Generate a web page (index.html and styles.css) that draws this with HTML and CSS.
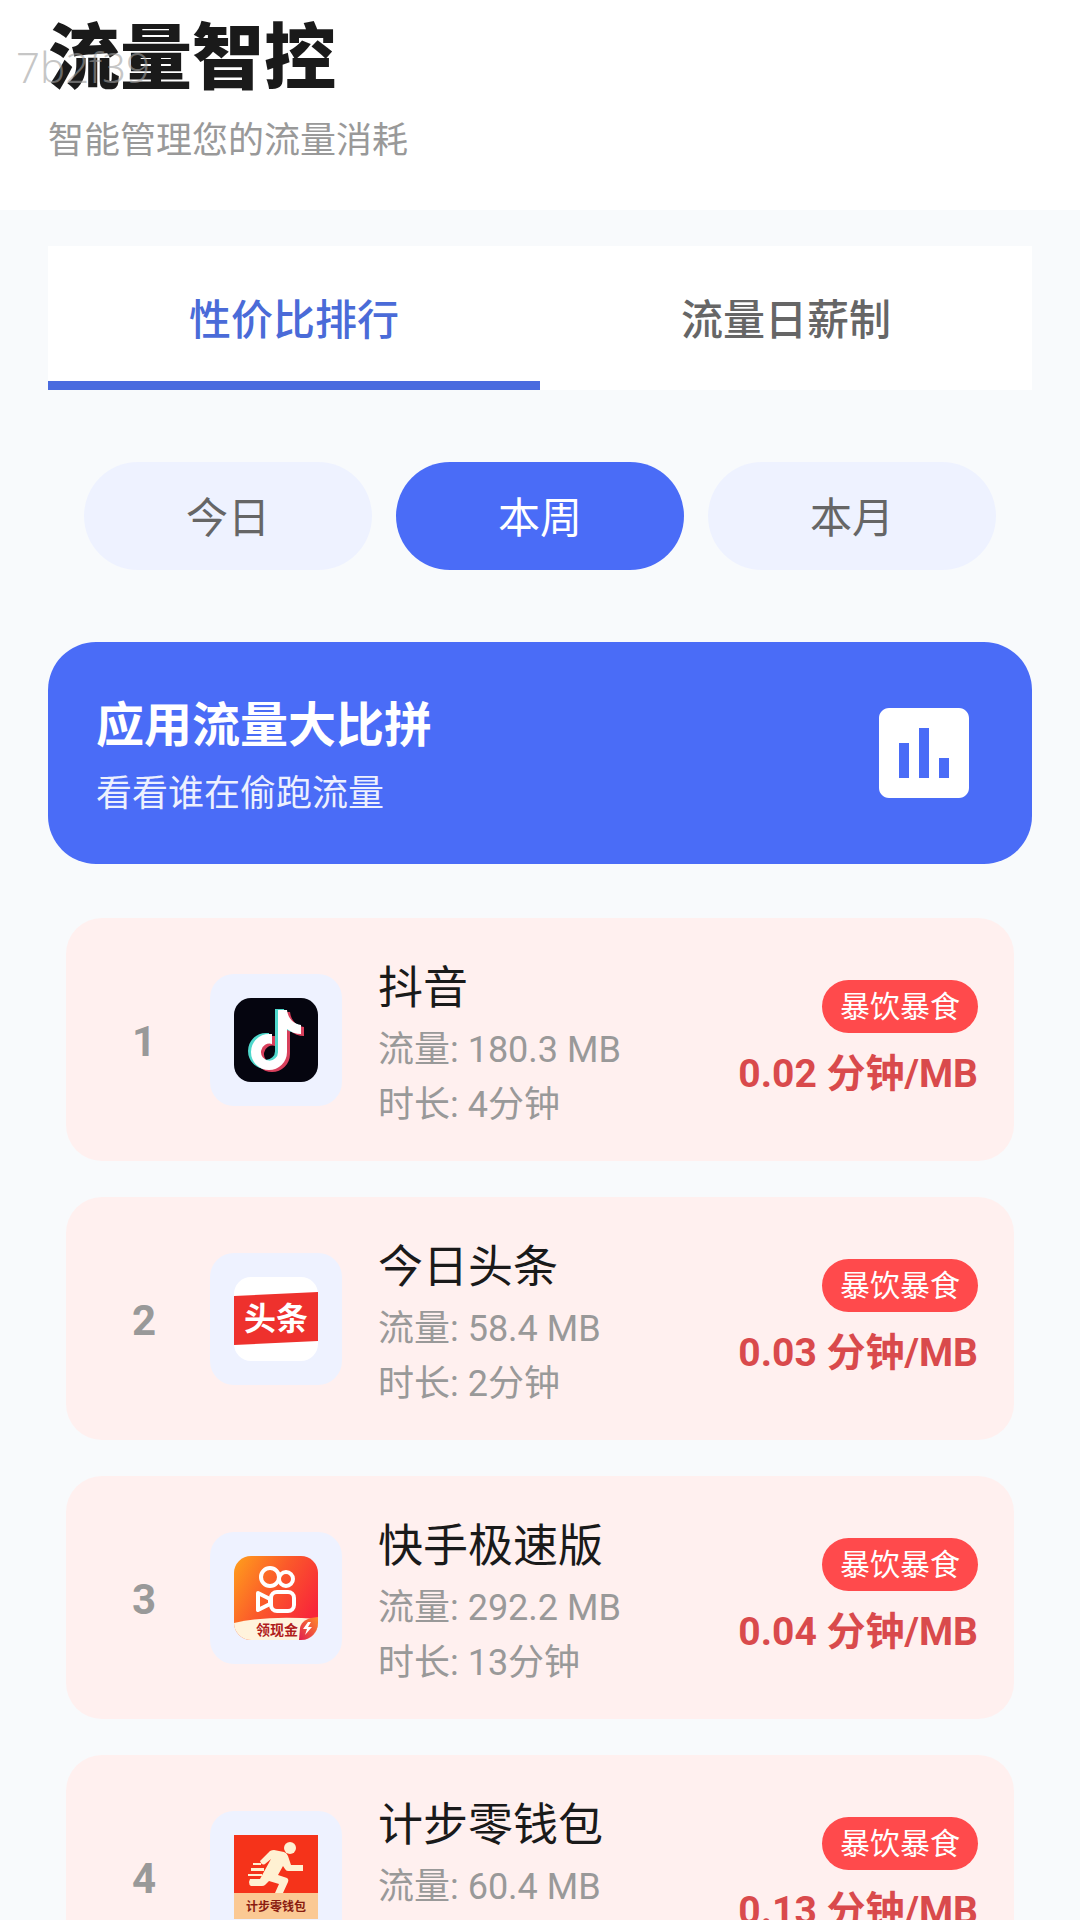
FILE: index.html
```html
<!DOCTYPE html>
<html lang="zh-CN">
<head>
  <meta charset="UTF-8">
  <meta name="viewport" content="width=device-width, initial-scale=1.0">
  <title>流量智控</title>
  <link rel="stylesheet" href="styles.css">
</head>
<body>
<header class="header">
  <h1>流量智控</h1>
  <p class="subtitle">智能管理您的流量消耗</p>
  <span class="watermark">7b2f39</span>
</header>

<main class="main-content">
  <div class="tabs">
    <button class="tab active" type="button">性价比排行</button>
    <button class="tab" type="button">流量日薪制</button>
  </div>

  <div class="periods">
    <button class="period" type="button">今日</button>
    <button class="period active" type="button">本周</button>
    <button class="period" type="button">本月</button>
  </div>

  <section class="banner">
    <div>
      <h2>应用流量大比拼</h2>
      <p>看看谁在偷跑流量</p>
    </div>
    <svg class="banner-icon" viewBox="0 0 24 24" fill="#fff">
      <path d="M19 3H5c-1.1 0-2 .9-2 2v14c0 1.1.9 2 2 2h14c1.1 0 2-.9 2-2V5c0-1.1-.9-2-2-2zM9 17H7v-7h2v7zm4 0h-2V7h2v10zm4 0h-2v-4h2v4z"/>
    </svg>
  </section>

  <ol class="app-list">
    <li class="app-item">
      <span class="rank">1</span>
      <div class="app-icon">
        <svg viewBox="0 0 84 84">
          <defs>
            <path id="note" d="M43 12h9c1 8 6 14 14 15v9c-5 0-10-2-14-5v23a18 18 0 1 1-18-18h3v10a8.500 8.500 0 1 0 6 8z"/>
          </defs>
          <rect width="84" height="84" rx="17" fill="#05050f"/>
          <use href="#note" x="4" y="2" fill="#d8405c"/>
          <use href="#note" x="-2" y="-1" fill="#4fd8cc"/>
          <use href="#note" x="1" fill="#fff"/>
        </svg>
      </div>
      <div class="app-info">
        <h3>抖音</h3>
        <p>流量: 180.3 MB</p>
        <p>时长: 4分钟</p>
      </div>
      <div class="app-score">
        <span class="badge">暴饮暴食</span>
        <span class="ratio">0.02 分钟/MB</span>
      </div>
    </li>

    <li class="app-item">
      <span class="rank">2</span>
      <div class="app-icon">
        <svg viewBox="0 0 84 84">
          <rect width="84" height="84" rx="17" fill="#fff"/>
          <path d="M0 19L84 15V64L0 68z" fill="#ee312d"/>
          <text class="toutiao-text" x="42" y="53">头条</text>
        </svg>
      </div>
      <div class="app-info">
        <h3>今日头条</h3>
        <p>流量: 58.4 MB</p>
        <p>时长: 2分钟</p>
      </div>
      <div class="app-score">
        <span class="badge">暴饮暴食</span>
        <span class="ratio">0.03 分钟/MB</span>
      </div>
    </li>

    <li class="app-item">
      <span class="rank">3</span>
      <div class="app-icon">
        <svg viewBox="0 0 84 84">
          <defs>
            <linearGradient id="ksBg" x1="0" y1="0" x2="1" y2="0.6">
              <stop offset="0" stop-color="#ffa01c"/>
              <stop offset="0.5" stop-color="#fb5a2a"/>
              <stop offset="1" stop-color="#f8253a"/>
            </linearGradient>
            <linearGradient id="ksCorner" x1="1" y1="0" x2="0" y2="1">
              <stop offset="0" stop-color="#ff8a2a"/>
              <stop offset="1" stop-color="#e01c50"/>
            </linearGradient>
            <clipPath id="ksClip"><rect width="84" height="84" rx="17"/></clipPath>
          </defs>
          <g clip-path="url(#ksClip)">
            <rect width="84" height="84" fill="url(#ksBg)"/>
            <path d="M0 67Q34 59 84 63V84H0z" fill="#fff3dc"/>
            <path d="M84 61Q68 62 66 72L65 84H84z" fill="url(#ksCorner)"/>
            <path d="M74 66l-5 7h4l-2 6 7-8h-4l3-5z" fill="#fff"/>
          </g>
          <g fill="none" stroke="#fff" stroke-width="4" stroke-linejoin="round">
            <circle cx="36" cy="21" r="9"/>
            <circle cx="52" cy="23" r="7"/>
            <rect x="37" y="36" width="23" height="19" rx="6"/>
            <path d="M24 37L36 43V48L24 54z"/>
          </g>
          <text class="ks-text" x="43" y="79">领现金</text>
        </svg>
      </div>
      <div class="app-info">
        <h3>快手极速版</h3>
        <p>流量: 292.2 MB</p>
        <p>时长: 13分钟</p>
      </div>
      <div class="app-score">
        <span class="badge">暴饮暴食</span>
        <span class="ratio">0.04 分钟/MB</span>
      </div>
    </li>

    <li class="app-item">
      <span class="rank">4</span>
      <div class="app-icon">
        <svg viewBox="0 0 84 84">
          <rect width="84" height="59" fill="#f5331a"/>
          <rect y="58" width="84" height="26" fill="#fbc994"/>
          <g fill="#fff1d2">
            <circle cx="56" cy="13" r="6"/>
            <path d="M26 26L36 16Q38 15 40 15L50 17Q53 18 54 21L57 30H69V36H54Q52 36 51 34L49 31L44 40L53 43Q55 44 54 47L49 58H41L45 49L35 46L31 50Q30 51 28 51H17Q15 50 15 47L16 44H26L37 24L31 29Q28 31 26 26z"/>
            <path d="M19 28h8v2h-8zM17 33h13v3h-13zM14 39h14v2h-14z"/>
          </g>
          <text class="step-text" x="42" y="76">计步零钱包</text>
        </svg>
      </div>
      <div class="app-info">
        <h3>计步零钱包</h3>
        <p>流量: 60.4 MB</p>
        <p>时长: 8分钟</p>
      </div>
      <div class="app-score">
        <span class="badge">暴饮暴食</span>
        <span class="ratio">0.13 分钟/MB</span>
      </div>
    </li>
  </ol>
</main>
</body>
</html>
```

FILE: styles.css
```css
* {
  box-sizing: border-box;
}

body {
  display: flex;
  flex-direction: column;
  height: 100vh;
  margin: 0;
  overflow: hidden;
  font-family: Roboto, "Noto Sans CJK SC", sans-serif;
  background-color: #f8fafc;
  color: #1a1a1a;
}

h1, h2, h3, p {
  margin: 0;
}

button {
  border: none;
  padding: 0;
  font-family: inherit;
  font-size: 42px;
  color: #666;
  cursor: pointer;
}

.header {
  position: relative;
  flex-shrink: 0;
  padding: 11px 48px 45px;
  background-color: #fff;
}

.header h1 {
  font-size: 72px;
  line-height: 96px;
  font-weight: 900;
}

.subtitle {
  margin-top: 10px;
  font-size: 36px;
  line-height: 48px;
  color: #999;
}

.watermark {
  position: absolute;
  left: 16px;
  top: 40px;
  font-family: "Noto Sans", sans-serif;
  font-size: 42px;
  line-height: 54px;
  font-weight: 300;
  color: rgba(160, 160, 160, 0.6);
}

.main-content {
  flex: 1;
  min-height: 0;
  padding: 36px 48px;
}

.tabs {
  display: flex;
  background-color: #fff;
}

.tab {
  flex: 1;
  height: 144px;
  border-top: 5px solid transparent;
  border-bottom: 9px solid transparent;
  background: none;
  font-weight: 500;
}

.tab.active {
  color: #4a6bd8;
  border-bottom-color: #4a6bdf;
}

.periods {
  display: flex;
  gap: 24px;
  padding: 72px 36px;
}

.period {
  flex: 1;
  height: 108px;
  padding-bottom: 4px;
  border-radius: 54px;
  background-color: #eef2ff;
}

.period.active {
  background-color: #4a6cf7;
  color: #fff;
}

.banner {
  display: flex;
  align-items: center;
  justify-content: space-between;
  padding: 48px;
  border-radius: 48px;
  background-color: #4a6cf7;
  color: #fff;
}

.banner h2 {
  font-size: 48px;
  line-height: 72px;
  font-weight: 700;
}

.banner p {
  margin-top: 8px;
  font-size: 36px;
  line-height: 48px;
  opacity: 0.9;
}

.banner-icon {
  width: 120px;
  height: 120px;
}

.banner > div {
  height: 126px;
}

.app-list {
  display: flex;
  flex-direction: column;
  gap: 36px;
  margin: 54px 0 0;
  padding: 0 18px;
  list-style: none;
}

.app-item {
  display: flex;
  align-items: center;
  padding: 31px 36px;
  border-radius: 36px;
  background-color: #fff0ef;
}

.rank {
  width: 84px;
  margin-right: 24px;
  padding-top: 4px;
  text-align: center;
  font-size: 42px;
  font-weight: 700;
  color: #999;
}

.app-icon {
  display: flex;
  align-items: center;
  justify-content: center;
  width: 132px;
  height: 132px;
  margin-right: 36px;
  border-radius: 24px;
  background-color: #eef2ff;
}

.app-icon svg {
  width: 84px;
  height: 84px;
}

.app-icon text {
  text-anchor: middle;
  font-weight: 700;
}

.toutiao-text {
  font-size: 32px;
  fill: #fff;
}

.ks-text {
  font-size: 14px;
  fill: #b01c1c;
}

.step-text {
  font-size: 12px;
  fill: #8a1c10;
}

.app-info {
  flex: 1;
  padding-top: 4px;
}

.app-info h3 {
  font-size: 45px;
  line-height: 72px;
  font-weight: 400;
}

.app-info p {
  font-size: 36px;
  line-height: 50px;
  color: #999;
}

.app-info p + p {
  margin-top: 5px;
}

.app-score {
  display: flex;
  flex-direction: column;
  align-items: flex-end;
  gap: 15px;
}

.badge {
  padding: 1px 18px 0;
  border-radius: 27px;
  background-color: #ff4a4c;
  color: #fff;
  font-size: 30px;
  line-height: 52px;
}

.ratio {
  font-size: 39px;
  line-height: 52px;
  font-weight: 700;
  color: #d94a4c;
}
```
